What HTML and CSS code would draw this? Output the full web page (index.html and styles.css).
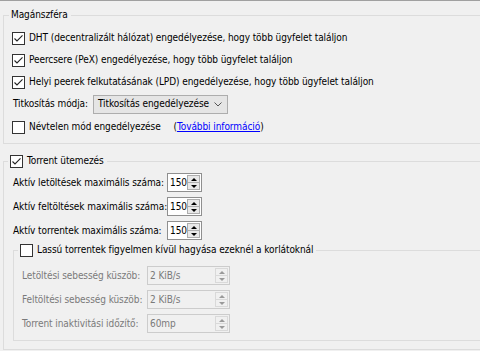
FILE: index.html
```html
<!DOCTYPE html>
<html lang="hu">
<head>
<meta charset="utf-8">
<title>Beállítások</title>
<link rel="stylesheet" href="styles.css">
</head>
<body>
<div class="page">
  <fieldset class="group privacy">
    <legend class="title">Magánszféra</legend>
    <div class="row">
      <label class="check"><span class="box"><svg viewBox="0 0 11 11" width="11" height="11"><path d="M1.5 5.5 L4 8 L9.5 2.3" /></svg></span><span>DHT (decentralizált hálózat) engedélyezése, hogy több ügyfelet találjon</span></label>
    </div>
    <div class="row">
      <label class="check"><span class="box"><svg viewBox="0 0 11 11" width="11" height="11"><path d="M1.5 5.5 L4 8 L9.5 2.3" /></svg></span><span>Peercsere (PeX) engedélyezése, hogy több ügyfelet találjon</span></label>
    </div>
    <div class="row">
      <label class="check"><span class="box"><svg viewBox="0 0 11 11" width="11" height="11"><path d="M1.5 5.5 L4 8 L9.5 2.3" /></svg></span><span>Helyi peerek felkutatásának (LPD) engedélyezése, hogy több ügyfelet találjon</span></label>
    </div>
    <div class="row">
      <span class="combo-label">Titkosítás módja:</span>
      <div class="combo"><span>Titkosítás engedélyezése</span><svg class="chev" viewBox="0 0 8 5" width="8" height="5"><path d="M0.5 0.5 L4 4 L7.5 0.5" /></svg></div>
    </div>
    <div class="row tall">
      <label class="check"><span class="box"></span><span>Névtelen mód engedélyezése</span></label>
      <span class="more">(<a href="#">További információ</a>)</span>
    </div>
  </fieldset>

  <fieldset class="group sched">
    <legend class="title"><label class="check"><span class="box"><svg viewBox="0 0 11 11" width="11" height="11"><path d="M1.5 5.5 L4 8 L9.5 2.3" /></svg></span><span>Torrent ütemezés</span></label></legend>
    <div class="spins">
      <span>Aktív letöltések maximális száma:</span>
      <div class="spin"><span class="val">150</span><span class="btns"><span class="btn up"></span><span class="btn down"></span></span></div>
      <span>Aktív feltöltések maximális száma:</span>
      <div class="spin"><span class="val">150</span><span class="btns"><span class="btn up"></span><span class="btn down"></span></span></div>
      <span>Aktív torrentek maximális száma:</span>
      <div class="spin"><span class="val">150</span><span class="btns"><span class="btn up"></span><span class="btn down"></span></span></div>
    </div>

    <fieldset class="group slow">
      <legend class="title"><label class="check"><span class="box"></span><span>Lassú torrentek figyelmen kívül hagyása ezeknél a korlátoknál</span></label></legend>
      <div class="spins wide disabled">
        <span>Letöltési sebesség küszöb:</span>
        <div class="spin"><span class="val">2 KiB/s</span><span class="btns"><span class="btn up"></span><span class="btn down"></span></span></div>
        <span>Feltöltési sebesség küszöb:</span>
        <div class="spin"><span class="val">2 KiB/s</span><span class="btns"><span class="btn up"></span><span class="btn down"></span></span></div>
        <span>Torrent inaktivitási időzítő:</span>
        <div class="spin"><span class="val">60mp</span><span class="btns"><span class="btn up"></span><span class="btn down"></span></span></div>
      </div>
    </fieldset>
  </fieldset>
</div>
</body>
</html>
```

FILE: styles.css
```css
html, body {
  margin: 0;
  padding: 0;
  background: #f0f0f0;
}

body {
  width: 480px;
  height: 351px;
  overflow: hidden;
  font-family: "DejaVu Sans Condensed", "DejaVu Sans", "Liberation Sans", sans-serif;
  font-size: 10px;
  line-height: 14px;
  letter-spacing: -0.08px;
  color: #000;
}

.page {
  border-top: 1px solid #a0a0a0;
  overflow: hidden;
}

.group {
  border: 1px solid #dcdcdc;
  border-right: none;
  margin: 0;
  padding: 0 0 0 8px;
  min-width: 0;
}

.title {
  line-height: 14px;
  height: 14px;
}

.privacy {
  margin: 7px 0 0 3px;
  padding-top: 5px;
  padding-bottom: 4px;
}

.privacy > .title {
  margin-left: -3px;
  padding: 0 3px 0 2px;
}

.row {
  display: flex;
  align-items: center;
  height: 22px;
}

.row.tall {
  height: 24px;
}

.check {
  display: flex;
  align-items: center;
  gap: 4px;
  white-space: nowrap;
}

.box {
  width: 13px;
  height: 13px;
  box-sizing: border-box;
  border: 1px solid #333;
  background: #fff;
  flex: none;
  display: flex;
  align-items: center;
  justify-content: center;
}

.box svg path {
  fill: none;
  stroke: #222;
  stroke-width: 1.1;
}

.combo-label {
  width: 80px;
  padding-left: 1px;
  white-space: nowrap;
}

.combo {
  width: 135px;
  height: 19px;
  box-sizing: border-box;
  border: 1px solid #adadad;
  background: #e5e5e5;
  display: flex;
  align-items: center;
  padding: 0 5px 0 4px;
  white-space: nowrap;
}

.combo .chev {
  margin-left: auto;
}

.chev path {
  fill: none;
  stroke: #555;
  stroke-width: 1;
}

.more {
  margin-left: 13px;
  white-space: nowrap;
}

.more a {
  color: #0000ff;
  text-decoration: underline;
}

.sched {
  margin: 10px 0 0 3px;
  padding-top: 5px;
  padding-bottom: 8px;
}

.sched > .title {
  margin-left: -4px;
  padding: 0 3px 0 2px;
}

.spins {
  display: grid;
  grid-template-columns: 155px 35px;
  grid-auto-rows: 19px;
  row-gap: 5px;
  align-items: center;
  white-space: nowrap;
}

.spins > span {
  padding-left: 1px;
}

.spins.wide {
  grid-template-columns: 126px 83px;
}

.spin {
  height: 19px;
  box-sizing: border-box;
  border: 1px solid #8f8f8f;
  background: #fff;
  display: flex;
  align-items: center;
  padding: 1px 1px 1px 2px;
}

.spin .val {
  flex: 1;
}

.btns {
  width: 13px;
  height: 100%;
  display: flex;
  flex-direction: column;
}

.btn {
  flex: 1;
  box-sizing: border-box;
  border: 1px solid #adadad;
  background: #e8e8e8;
  display: flex;
  align-items: center;
  justify-content: center;
}

.btn.down {
  border-top: none;
}

.btn::after {
  content: "";
  width: 0;
  height: 0;
  border-left: 3px solid transparent;
  border-right: 3px solid transparent;
}

.btn.up::after {
  border-bottom: 3px solid #000;
}

.btn.down::after {
  border-top: 3px solid #000;
}

.slow {
  margin: 3px 0 0 1px;
  padding: 9px 0 7px 7px;
}

.slow > .title {
  margin-left: -3px;
  padding: 0 3px 0 2px;
}

.disabled {
  color: #7a7a7a;
}

.disabled .spin {
  background: #f0f0f0;
  border-color: #cccccc;
}

.disabled .btn {
  background: #f0f0f0;
  border-color: #d9d9d9;
}

.disabled .btn.up::after {
  border-bottom-color: #9a9a9a;
}

.disabled .btn.down::after {
  border-top-color: #9a9a9a;
}
```
